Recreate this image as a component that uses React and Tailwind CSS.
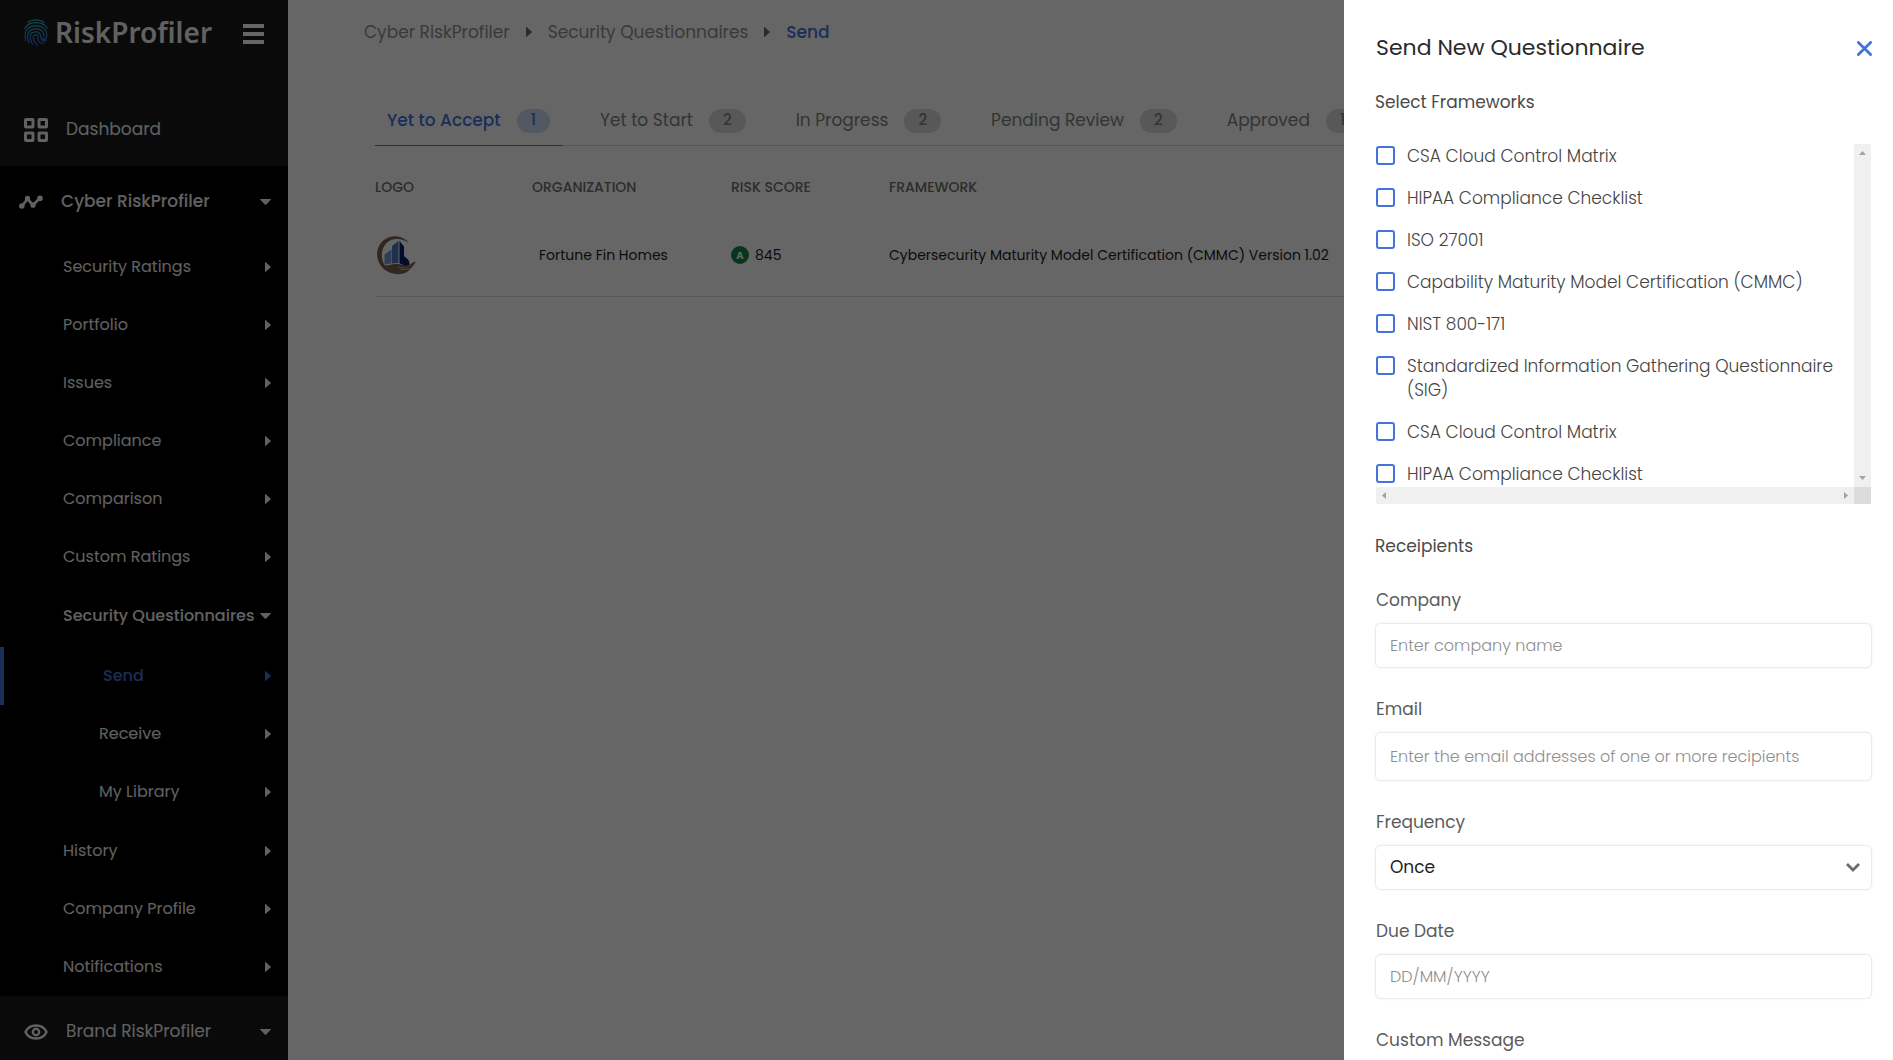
import { useState } from 'react'
import { clsx } from 'clsx'

const menu = [
  { label: 'Security Ratings' },
  { label: 'Portfolio' },
  { label: 'Issues' },
  { label: 'Compliance' },
  { label: 'Comparison' },
  { label: 'Custom Ratings' },
  {
    label: 'Security Questionnaires',
    children: [{ label: 'Send', active: true }, { label: 'Receive' }, { label: 'My Library' }],
  },
  { label: 'History' },
  { label: 'Company Profile' },
  { label: 'Notifications' },
]

const tabs = [
  { label: 'Yet to Accept', count: 1 },
  { label: 'Yet to Start', count: 2 },
  { label: 'In Progress', count: 2 },
  { label: 'Pending Review', count: 2 },
  { label: 'Approved', count: 1 },
]

const frameworks = [
  'CSA Cloud Control Matrix',
  'HIPAA Compliance Checklist',
  'ISO 27001',
  'Capability Maturity Model Certification (CMMC)',
  'NIST 800-171',
  'Standardized Information Gathering Questionnaire (SIG)',
  'CSA Cloud Control Matrix',
  'HIPAA Compliance Checklist',
]

function CaretRight({ className }) {
  return (
    <svg viewBox="0 0 6 10" className={clsx('w-1.5 h-2.5 shrink-0', className)} fill="currentColor">
      <path d="M0 0.4 Q0 -0.2 0.7 0.3 L5.6 4.4 Q6.2 5 5.6 5.6 L0.7 9.7 Q0 10.2 0 9.6 Z" />
    </svg>
  )
}

function CaretDown({ className }) {
  return (
    <svg viewBox="0 0 11 6" className={clsx('w-[11px] h-1.5 shrink-0', className)} fill="currentColor">
      <path d="M0.5 0 H10.5 Q11.2 0 10.7 0.7 L6.2 5.6 Q5.5 6.2 4.8 5.6 L0.3 0.7 Q-0.2 0 0.5 0 Z" />
    </svg>
  )
}

function Fingerprint() {
  return (
    <svg viewBox="0 0 24 27" className="w-6 h-[27px] shrink-0" fill="none" stroke="url(#print)" strokeWidth="1.2" strokeLinecap="round">
      <defs>
        <linearGradient id="print" x1="0" y1="0" x2="0" y2="27" gradientUnits="userSpaceOnUse">
          <stop offset="0" stopColor="#2fc7c0" />
          <stop offset="0.45" stopColor="#2f9fd8" />
          <stop offset="1" stopColor="#3b5fd8" />
        </linearGradient>
      </defs>
      <path d="M4 3.2 C8.5 0 15.5 0 20 3.2" />
      <path d="M0.8 9.4 C4.5 1.6 19.5 1.6 23.2 9.4" />
      <path d="M1.8 21.6 C-0.6 12 3.6 6.8 12 6.8 C19.5 6.8 23.4 11.4 22.6 17.4 C22.2 20.6 18.4 21.6 17.2 18.6" />
      <path d="M4.8 24 C2 16 4.2 9.8 12 9.8 C17.6 9.8 20.4 13.2 20 17.6" />
      <path d="M8.6 25.4 C4.6 18.6 5.4 12.8 12 12.8 C16 12.8 16.6 16 16.8 18 C17.4 22.6 20.4 22.6 22 21" />
      <path d="M13.2 26 C8.4 21 7.6 15.8 12 15.8 C14.6 15.8 13.6 18.6 14.2 20.6 C15 23.4 17.4 24.6 20 24" />
    </svg>
  )
}

function CompanyLogo() {
  return (
    <svg viewBox="0 0 40 40" className="w-10 h-10" role="img" aria-label="Fortune Fin Homes">
      <path
        d="M33 8 C27 0 15 -1 8 5 C0 11 -1 23 5 31 C10 38 21 41 29 38 C32 37 33 35 35 33 C37 31 39 29 39.5 26.5 C37 27 35.5 28 34 30.5 C30 31.5 27 29.5 22 29 C17 28.5 13 30 9 30.5 C4 24 5 13 11 7.5 C17 2.5 26 3 33 8 Z"
        fill="#7b6152"
      />
      <path d="M8.5 19.5 L15.5 14.5 V28.5 L8.5 29.5 Z" fill="#7c9cc8" />
      <path d="M16 11 L22.5 6 V28 L16 28.5 Z" fill="#4a7ac4" />
      <path d="M23.5 6 L28 11.5 V21 L32.5 25 L34 30 L30 31 L23.5 28.5 Z" fill="#0b1d6b" />
      <path d="M24 34.5 H33 M22 32.5 L33 33" stroke="#ddd2c8" strokeWidth="0.6" fill="none" />
    </svg>
  )
}

function Sidebar() {
  return (
    <aside className="w-72 shrink-0 bg-[#191919] text-[#f2f2f2] overflow-hidden">
      <div className="h-[94px] pl-6 pr-6 pt-3 flex items-start justify-between">
        <a href="#home" className="flex items-center gap-[7px] h-10">
          <Fingerprint />
          <span className="font-['Noto_Sans'] font-semibold text-[28px] leading-10">RiskProfiler</span>
        </a>
        <button type="button" aria-label="Toggle menu" className="h-11 w-[21px] flex flex-col justify-center gap-1">
          <span className="h-1 bg-white" />
          <span className="h-1 bg-white" />
          <span className="h-1 bg-white" />
        </button>
      </div>

      <nav>
        <a href="#dashboard" className="h-[72px] pl-6 flex items-center gap-[18px] text-[17px]">
          <svg viewBox="0 0 24 24" className="w-6 h-6" fill="none" stroke="currentColor" strokeWidth="3">
            <rect x="1.5" y="1.5" width="7.5" height="7.5" rx="0.5" />
            <rect x="15" y="1.5" width="7.5" height="7.5" rx="0.5" />
            <rect x="1.5" y="15" width="7.5" height="7.5" rx="0.5" />
            <rect x="15" y="15" width="7.5" height="7.5" rx="0.5" />
          </svg>
          Dashboard
        </a>

        <div className="bg-black">
          <button type="button" className="w-full h-[72px] pl-[19px] pr-[17px] flex items-center text-[17px] font-medium">
            <svg viewBox="0 0 24 14" className="w-6 h-3.5 mr-[18px]" fill="currentColor">
              <path d="M3 11 L8.5 4 L14 10 L21 3" fill="none" stroke="currentColor" strokeWidth="2.6" />
              <circle cx="2.8" cy="11" r="2.8" />
              <circle cx="8.5" cy="3.4" r="2.6" />
              <circle cx="14" cy="10.2" r="2.6" />
              <circle cx="21" cy="3.2" r="2.8" />
            </svg>
            Cyber RiskProfiler
            <CaretDown className="ml-auto" />
          </button>

          <ul>
            {menu.map(item => (
              <li key={item.label}>
                <a
                  href="#menu"
                  className={clsx(
                    'pl-[63px] pr-[17px] flex items-center justify-between text-[16px]',
                    item.children ? 'h-[60px] font-medium' : 'h-[58px]'
                  )}
                >
                  {item.label}
                  {item.children ? <CaretDown /> : <CaretRight />}
                </a>
                {item.children && (
                  <ul className="py-px">
                    {item.children.map(child => (
                      <li key={child.label}>
                        <a
                          href="#submenu"
                          className={clsx(
                            'h-[58px] pl-[99px] pr-[17px] flex items-center justify-between text-[16px]',
                            child.active && 'border-l-4 border-[#4374dd] text-[#4374dd] font-medium'
                          )}
                        >
                          {child.label}
                          <CaretRight />
                        </a>
                      </li>
                    ))}
                  </ul>
                )}
              </li>
            ))}
          </ul>
        </div>

        <button type="button" className="w-full h-[72px] pl-6 pr-[17px] flex items-center gap-[18px] text-[17px]">
          <svg viewBox="0 0 24 16" className="w-6 h-4" fill="none" stroke="currentColor">
            <path d="M1.4 8 C5.5 -0.6 18.5 -0.6 22.6 8 C18.5 16.6 5.5 16.6 1.4 8 Z" strokeWidth="2.4" />
            <circle cx="12" cy="8" r="3.2" strokeWidth="2.4" />
          </svg>
          Brand RiskProfiler
          <CaretDown className="ml-auto" />
        </button>
      </nav>
    </aside>
  )
}

function Main({ tab, setTab }) {
  return (
    <main className="flex-1 min-w-0 bg-white pl-[76px] pr-10">
      <nav aria-label="Breadcrumb" className="pt-5 flex items-center text-[17px] leading-6 text-[#8f8f8f]">
        <a href="#cyber">Cyber RiskProfiler</a>
        <CaretRight className="mx-4 text-[#6b6b6b]" />
        <a href="#questionnaires">Security Questionnaires</a>
        <CaretRight className="mx-4 text-[#6b6b6b]" />
        <span className="text-[#4374dd] font-medium">Send</span>
      </nav>

      <div className="ml-[11px] mt-[52px] flex gap-[26px] border-b border-[#d4d4d4] whitespace-nowrap">
        {tabs.map(t => (
          <button
            key={t.label}
            type="button"
            onClick={() => setTab(t.label)}
            className={clsx(
              'px-3 h-[50px] -mb-px flex items-center gap-4 text-[17px] border-b',
              tab === t.label ? 'border-[#4374dd] text-[#4374dd] font-medium' : 'border-transparent text-[#828282]'
            )}
          >
            {t.label}
            <span
              className={clsx(
                'h-6 px-3.5 rounded-full flex items-center text-[15px] font-medium',
                tab === t.label ? 'bg-[#cfdcf8]' : 'bg-[#dcdcdc]'
              )}
            >
              {t.count}
            </span>
          </button>
        ))}
      </div>

      <table className="ml-[11px] mt-[29px] w-[calc(100%-11px)] table-fixed text-left text-[14px] whitespace-nowrap">
        <thead>
          <tr className="h-6 text-[#6f6f6f]">
            <th className="w-[157px] font-medium">LOGO</th>
            <th className="w-[199px] font-medium">ORGANIZATION</th>
            <th className="w-[158px] font-medium">RISK SCORE</th>
            <th className="font-medium">FRAMEWORK</th>
          </tr>
        </thead>
        <tbody>
          <tr className="h-[97px] border-b border-[#dcdcdc] text-[#222]">
            <td className="pt-4 pl-px">
              <CompanyLogo />
            </td>
            <td className="pt-4 pl-[7px]">Fortune Fin Homes</td>
            <td className="pt-4">
              <span className="flex items-center gap-1.5">
                <span className="w-[18px] h-[18px] rounded-full bg-[#0d8a4a] text-white text-[10px] font-bold flex items-center justify-center">
                  A
                </span>
                845
              </span>
            </td>
            <td className="pt-4">Cybersecurity Maturity Model Certification (CMMC) Version 1.02</td>
          </tr>
        </tbody>
      </table>
    </main>
  )
}

function Field({ id, label, children }) {
  return (
    <div>
      <label htmlFor={id} className="block mb-[11px] pl-px text-[17px] leading-6 text-[#5b5b5b]">
        {label}
      </label>
      {children}
    </div>
  )
}

const inputClass =
  'block w-full px-[14px] rounded-md border border-[#ebebeb] bg-white shadow-[0_0_3px_rgba(0,0,0,0.06)] outline-none placeholder:text-[#8f8f8f]'

function FrameworkList() {
  return (
    <div className="px-px grid grid-cols-[minmax(0,1fr)_17px] grid-rows-[343px_17px]">
      <ul className="overflow-hidden flex flex-col gap-[18px] pr-3">
        {frameworks.map((name, i) => (
          <li key={i} className="shrink-0 flex items-start">
            <input
              id={`framework-${i}`}
              type="checkbox"
              className="appearance-none mt-0.5 mr-3 w-[19px] h-[19px] shrink-0 rounded-[3px] border-2 border-[#4374dd] checked:bg-[#4374dd]"
            />
            <label htmlFor={`framework-${i}`} className="text-[17px] leading-6 font-light text-[#444]">
              {name}
            </label>
          </li>
        ))}
      </ul>
      <div className="bg-[#f0f0f0] text-[#a3a3a3] flex flex-col items-center justify-between py-[7px]">
        <svg viewBox="0 0 7 4" className="w-[7px] h-1" fill="currentColor"><path d="M3.5 0 L7 4 H0 Z" /></svg>
        <svg viewBox="0 0 7 4" className="w-[7px] h-1" fill="currentColor"><path d="M0 0 H7 L3.5 4 Z" /></svg>
      </div>
      <div className="bg-[#f0f0f0] text-[#a3a3a3] flex items-center justify-between px-1.5">
        <svg viewBox="0 0 4 7" className="w-1 h-[7px]" fill="currentColor"><path d="M4 0 V7 L0 3.5 Z" /></svg>
        <svg viewBox="0 0 4 7" className="w-1 h-[7px]" fill="currentColor"><path d="M0 0 L4 3.5 L0 7 Z" /></svg>
      </div>
      <div className="bg-[#dcdcdc]" />
    </div>
  )
}

function SendDrawer({ onClose }) {
  return (
    <div
      role="dialog"
      aria-label="Send New Questionnaire"
      className="absolute inset-y-0 right-0 w-[549px] max-w-full bg-white pl-[31px] pr-[21px] pt-8 overflow-y-auto [scrollbar-width:none]"
    >
      <div className="pl-px flex items-center justify-between">
        <h2 className="text-[22px] leading-8 text-[#2b2b2b]">Send New Questionnaire</h2>
        <button type="button" aria-label="Close" onClick={onClose} className="text-[#4374dd]">
          <svg viewBox="0 0 15 15" className="w-[15px] h-[15px]" fill="none" stroke="currentColor" strokeWidth="2.8" strokeLinecap="round">
            <path d="M1.4 1.4 L13.6 13.6 M13.6 1.4 L1.4 13.6" />
          </svg>
        </button>
      </div>

      <form onSubmit={e => e.preventDefault()}>
        <h3 className="mt-[26px] mb-[30px] text-[17px] leading-6 text-[#4a4a4a]">Select Frameworks</h3>
        <FrameworkList />

        <h3 className="mt-[30px] mb-[30px] text-[17px] leading-6 text-[#4a4a4a]">Receipients</h3>
        <div className="flex flex-col gap-[29px] pb-8">
          <Field id="company" label="Company">
            <input id="company" type="text" placeholder="Enter company name" className={clsx(inputClass, 'h-[45px] text-[16px] font-light')} />
          </Field>
          <Field id="email" label="Email">
            <input
              id="email"
              type="text"
              placeholder="Enter the email addresses of one or more recipients"
              className={clsx(inputClass, 'h-[49px] text-[16px] font-light')}
            />
          </Field>
          <Field id="frequency" label="Frequency">
            <div className="relative">
              <select id="frequency" className={clsx(inputClass, 'h-[45px] text-[17px] appearance-none text-[#222]')}>
                <option>Once</option>
                <option>Monthly</option>
                <option>Quarterly</option>
              </select>
              <svg
                viewBox="0 0 14 9"
                className="absolute right-3 top-[18px] w-3.5 h-[9px] pointer-events-none text-[#6b6b6b]"
                fill="none"
                stroke="currentColor"
                strokeWidth="2.8"
              >
                <path d="M1 1 L7 7 L13 1" />
              </svg>
            </div>
          </Field>
          <Field id="due" label="Due Date">
            <input id="due" type="text" placeholder="DD/MM/YYYY" className={clsx(inputClass, 'h-[45px] text-[16px] font-light')} />
          </Field>
          <Field id="message" label="Custom Message">
            <textarea id="message" rows={4} className={clsx(inputClass, 'py-3 text-[16px]')} />
          </Field>
        </div>
      </form>
    </div>
  )
}

export default function App() {
  const [tab, setTab] = useState('Yet to Accept')
  const [open, setOpen] = useState(true)

  return (
    <div className="relative flex h-screen overflow-hidden font-['Poppins','Inter',sans-serif]">
      <Sidebar />
      <Main tab={tab} setTab={setTab} />
      {open && (
        <>
          <div className="absolute inset-0 bg-black/60" />
          <SendDrawer onClose={() => setOpen(false)} />
        </>
      )}
    </div>
  )
}
